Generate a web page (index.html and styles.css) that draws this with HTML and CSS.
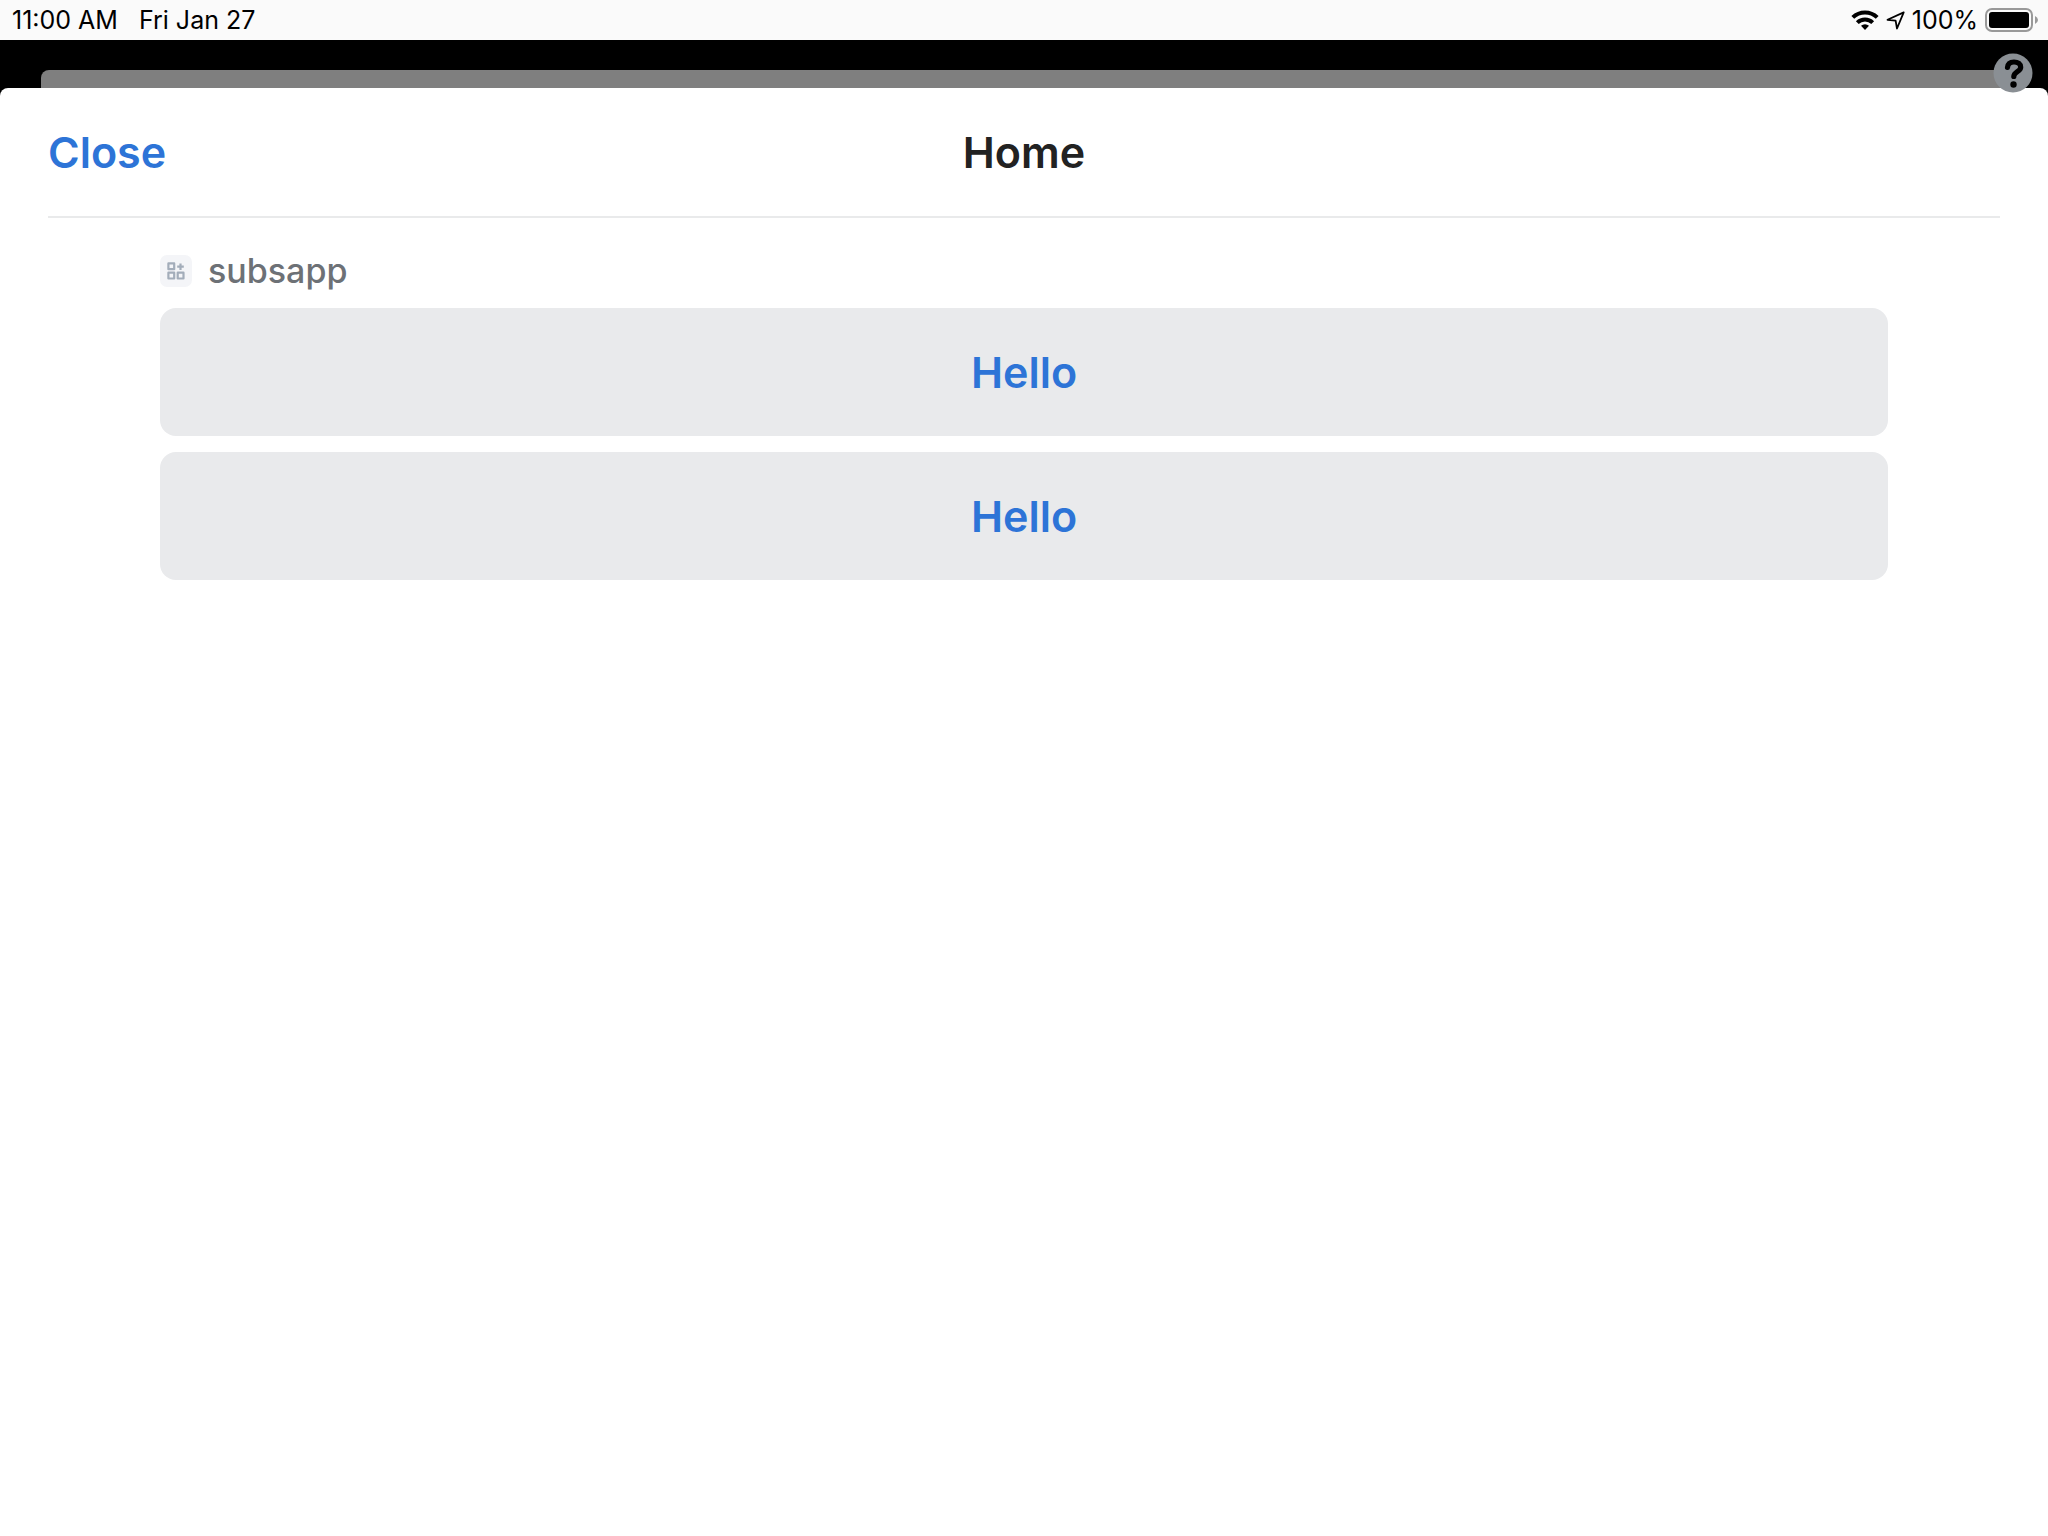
FILE: index.html
```html
<!DOCTYPE html>
<html lang="en">
<head>
<meta charset="utf-8">
<meta name="viewport" content="width=device-width, initial-scale=1">
<title>Home</title>
<link rel="stylesheet" href="styles.css">
</head>
<body>
<div class="status-bar">
  <div class="status-group status-time">
    <span>11:00 AM</span>
    <span>Fri Jan 27</span>
  </div>
  <div class="status-group status-icons">
    <svg class="wifi" width="28" height="20" viewBox="0 0 28 20" aria-label="Wi-Fi">
      <g fill="none" stroke="#000" stroke-width="4">
        <path d="M1.8 7.4a17.5 17.5 0 0 1 24.4 0"/>
        <path d="M6.3 12.6a11 11 0 0 1 15.4 0"/>
      </g>
      <path d="M14 20l-4-4.200a6 6 0 0 1 8 0z"/>
    </svg>
    <svg class="location" width="19" height="19" viewBox="0 0 19 19" aria-label="Location">
      <path d="M17.7 1.400L1.500 8.800l8.100.8 1.400 7.900z" fill="none" stroke="#000" stroke-width="1.800" stroke-linejoin="round"/>
    </svg>
    <span>100%</span>
    <svg class="battery" width="53" height="24" viewBox="0 0 53 24" aria-label="Battery full">
      <rect x="1" y="1" width="46" height="22" rx="6" fill="none" stroke="#999" stroke-width="2"/>
      <rect x="4" y="4" width="40" height="16" rx="3"/>
      <path d="M50 8q3 1.500 3 4t-3 4z" fill="#999"/>
    </svg>
  </div>
</div>
<div class="backdrop">
  <div class="back-card"></div>
  <button class="help" type="button" aria-label="Help">
    <svg width="40" height="40" viewBox="0 0 40 40">
      <circle cx="20" cy="20" r="19.500" fill="#8a8f94"/>
      <path d="M14.500 14.500C14.800 10.800 17 9 21 9C25 9 27.700 11 27.700 14.200C27.700 18.500 20.800 18.900 20.800 23.500" fill="none" stroke="#000" stroke-width="5.200" stroke-linecap="round"/>
      <circle cx="20.500" cy="31.500" r="3.200"/>
    </svg>
  </button>
</div>
<main class="sheet">
  <header class="sheet-header">
    <button class="close" type="button">Close</button>
    <h1 class="title">Home</h1>
  </header>
  <section class="content">
    <div class="app">
      <svg class="app-icon" width="32" height="32" viewBox="0 0 32 32" aria-hidden="true">
        <rect width="32" height="32" rx="7" fill="#f4f5f8"/>
        <g fill="none" stroke="#a3adba" stroke-width="2.200" stroke-linejoin="round">
          <rect x="8.400" y="8.400" width="5.800" height="5.800"/>
          <rect x="8.400" y="17.700" width="5.800" height="5.800"/>
          <rect x="17.700" y="17.700" width="5.800" height="5.800"/>
          <path d="M20.500 8.500v6.500M17.200 11.700h6.600"/>
        </g>
      </svg>
      <span class="app-name">subsapp</span>
    </div>
    <button class="action" type="button">Hello</button>
    <button class="action" type="button">Hello</button>
  </section>
</main>
</body>
</html>
```
FILE: styles.css
```css
* {
  box-sizing: border-box;
}

body {
  margin: 0;
  min-height: 100vh;
  display: flex;
  flex-direction: column;
  background: #000;
  font-family: Inter, "Liberation Sans", sans-serif;
}

button {
  margin: 0;
  padding: 0;
  border: 0;
  background: none;
  font: inherit;
  cursor: pointer;
}

svg {
  display: block;
  flex: none;
}

.status-bar {
  height: 40px;
  padding: 0 10px 0 12px;
  display: flex;
  align-items: center;
  justify-content: space-between;
  background: #fafafa;
  color: #000;
  font-size: 25px;
  line-height: 40px;
}

.status-group {
  display: flex;
  align-items: center;
}

.status-time {
  gap: 21px;
}

.status-icons {
  gap: 7px;
}

.backdrop {
  position: relative;
  height: 48px;
  padding: 30px 41px 0;
}

.back-card {
  height: 100%;
  border-radius: 8px 8px 0 0;
  background: #7f7f7f;
}

.help {
  position: absolute;
  top: 13px;
  right: 15px;
}

.sheet {
  flex: 1;
  padding: 0 48px 48px;
  border-radius: 8px 8px 0 0;
  background: #fff;
}

.sheet-header {
  height: 130px;
  display: grid;
  grid-template-columns: 1fr auto 1fr;
  align-items: center;
  border-bottom: 2px solid #e9eaeb;
}

.close {
  justify-self: start;
  color: #2d74d7;
  font-size: 43px;
  font-weight: 600;
}

.title {
  margin: 0;
  color: #222;
  font-size: 43px;
  font-weight: 600;
}

.content {
  padding: 32px 112px 0;
  display: flex;
  flex-direction: column;
  gap: 16px;
}

.app {
  height: 42px;
  display: flex;
  align-items: center;
  gap: 16px;
}

.app-name {
  color: #6d7176;
  font-size: 34px;
  font-weight: 500;
  line-height: 42px;
}

.action {
  height: 128px;
  border-radius: 16px;
  background: #e9eaec;
  color: #2d74d7;
  font-size: 43px;
  font-weight: 600;
}
```
